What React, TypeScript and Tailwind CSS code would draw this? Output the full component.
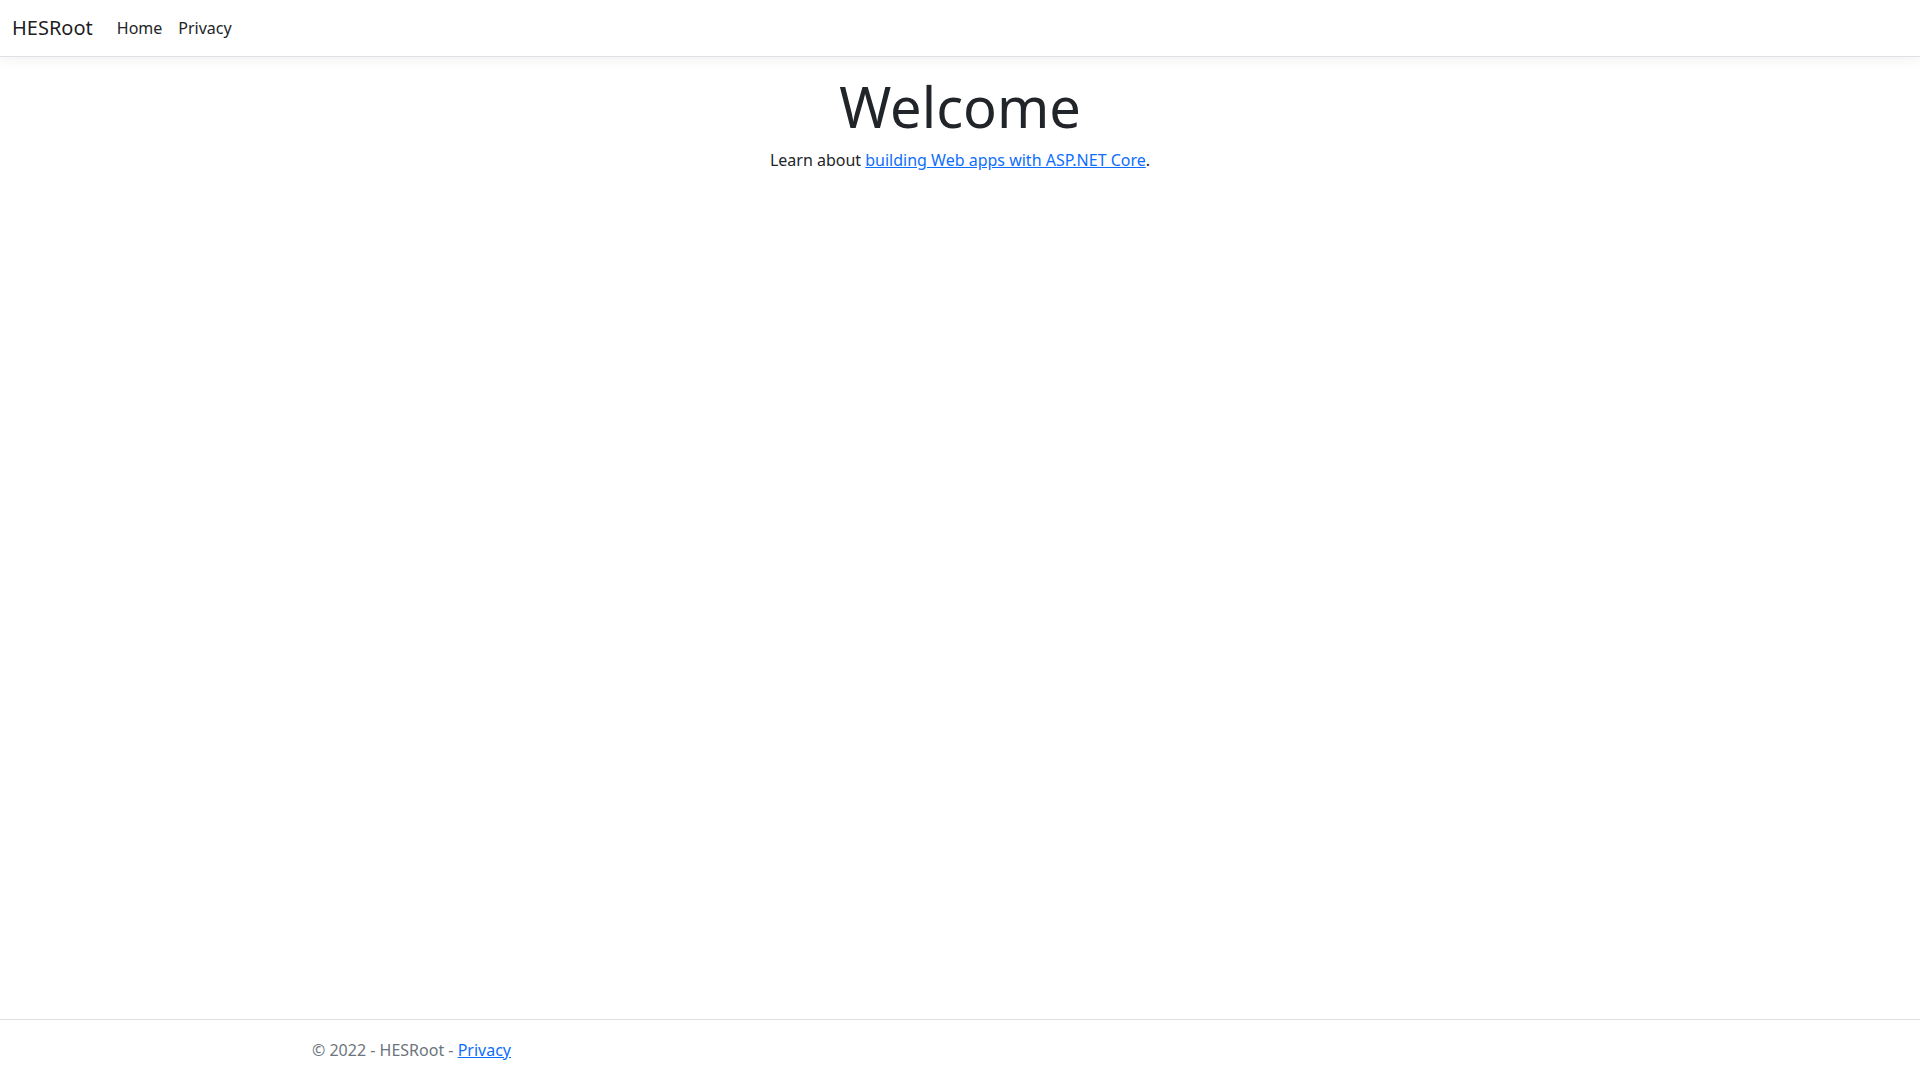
export default function App() {
  return (
    <div className="flex min-h-screen flex-col bg-white text-base leading-6 text-[#212529] [font-family:'Noto_Sans',sans-serif]">
      <header>
        <nav className="mb-4 border-b border-[#dee2e6] bg-white shadow-[0_4px_12px_rgba(0,0,0,0.05)]">
          <div className="flex items-center px-3 py-2">
            <a href="#" className="mr-4 py-[5px] text-[20px] leading-[30px] text-black/90">
              HESRoot
            </a>
            <ul className="flex">
              <li>
                <a href="#" className="block px-2 py-2 text-[#212529]">
                  Home
                </a>
              </li>
              <li>
                <a href="#" className="block px-2 py-2 text-[#212529]">
                  Privacy
                </a>
              </li>
            </ul>
          </div>
        </nav>
      </header>

      <main className="mx-auto w-full max-w-[1320px] flex-1 px-3 pb-4">
        <div className="text-center">
          <h1 className="mb-2 text-[56px] leading-[1.2] font-normal">Welcome</h1>
          <p className="mb-4">
            Learn about{" "}
            <a href="#" className="text-[#0d6efd] underline">
              building Web apps with ASP.NET Core
            </a>
            .
          </p>
        </div>
      </main>

      <footer className="border-t border-[#dee2e6] whitespace-nowrap text-[#6c757d] leading-[60px]">
        <div className="mx-auto w-full max-w-[1320px] px-3">
          &copy; 2022 - HESRoot -{" "}
          <a href="#" className="text-[#0d6efd] underline">
            Privacy
          </a>
        </div>
      </footer>
    </div>
  );
}
